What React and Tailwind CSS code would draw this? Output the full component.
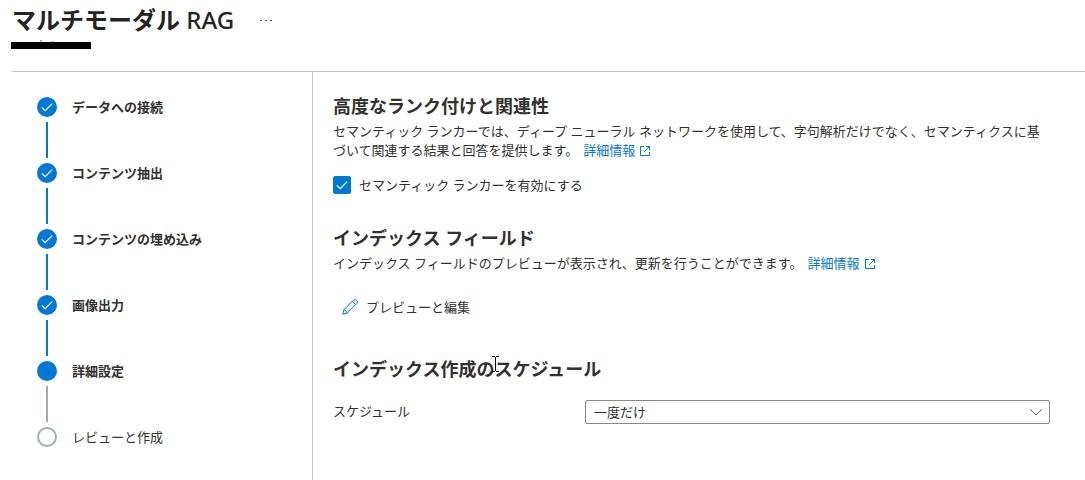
import React, { useState } from "react";

const steps = [
  { label: "データへの接続", status: "done" },
  { label: "コンテンツ抽出", status: "done" },
  { label: "コンテンツの埋め込み", status: "done" },
  { label: "画像出力", status: "done" },
  { label: "詳細設定", status: "current" },
  { label: "レビューと作成", status: "todo" },
];

const CheckMark = ({ className }) => (
  <svg viewBox="0 0 12 12" className={className} fill="none" stroke="currentColor" strokeWidth="1.2" aria-hidden="true">
    <path d="M0.8 6.3 4.2 9.7 11.2 2.7" />
  </svg>
);

const ExternalIcon = () => (
  <svg viewBox="0 0 10 10" className="ml-[5px] inline-block h-[10px] w-[10px] align-[-1px]" fill="none" stroke="currentColor" aria-hidden="true">
    <path d="M4 0.5H0.5V9.5H9.5V6M6 0.5H9.5V4M9.5 0.5 4 6" />
  </svg>
);

const PencilIcon = () => (
  <svg viewBox="0 0 16 16" className="h-4 w-4 text-[#0078d4]" fill="none" stroke="currentColor" aria-hidden="true">
    <path d="M0.7 15.3 1.9 10.8 11.6 1.1Q13.2 -0.1 14.7 1.3 16.1 2.8 14.9 4.4L5.2 14.1ZM1.9 10.8Q4.7 11.3 5.2 14.1M10.4 2.3 13.7 5.6" />
  </svg>
);

const Step = ({ step, isLast }) => {
  const done = step.status === "done";
  const todo = step.status === "todo";

  return (
    <li className="flex gap-[15px]">
      <div className="flex w-5 flex-col items-center">
        <span
          className={`flex h-5 w-5 items-center justify-center rounded-full text-white ${
            todo ? "border-2 border-[#a0aeb2] bg-white" : "bg-[#0078d4]"
          }`}
        >
          {done && <CheckMark className="h-3 w-3" />}
        </span>
        {!isLast && <span className={`my-[5px] h-9 w-0.5 ${done ? "bg-[#0078d4]" : "bg-[#a0aeb2]"}`} />}
      </div>
      <a href="#" className={`h-5 leading-5 ${todo ? "" : "font-semibold"}`}>
        {step.label}
      </a>
    </li>
  );
};

const InfoLink = () => (
  <a href="#" className="ml-[5px] whitespace-nowrap text-[#0078d4]">
    詳細情報
    <ExternalIcon />
  </a>
);

const App = () => {
  const [semantic, setSemantic] = useState(true);
  const [schedule, setSchedule] = useState("once");

  return (
    <div
      lang="ja"
      className="flex min-h-screen flex-col overflow-hidden bg-white pl-3 font-['Noto_Sans','Noto_Sans_CJK_JP',sans-serif] text-[13px] text-[#323130]"
    >
      <header className="h-[72px] border-b border-[#c4c4c4]">
        <div className="flex h-10 items-center">
          <h1 className="text-2xl leading-10 font-bold text-[#242424]">
            マルチモーダル <span className="font-medium">RAG</span>
          </h1>
          <button type="button" aria-label="その他" className="ml-[25px] flex gap-[3px] p-px">
            <span className="h-px w-0.5 bg-[#605e5c]" />
            <span className="h-px w-0.5 bg-[#605e5c]" />
            <span className="h-px w-0.5 bg-[#605e5c]" />
          </button>
        </div>
        {/* redacted subtitle, tips of its letters stay visible above the bar */}
        <div className="flex h-0.5 items-end gap-[10px] pl-7">
          <span className="h-0.5 w-0.5 bg-[#b5a9a3]" />
          <span className="h-px w-0.5 bg-[#a3a3b5]" />
        </div>
        <div className="-ml-px h-[7px] w-20 bg-black" />
      </header>

      <div className="flex flex-1">
        <nav className="w-[301px] shrink-0 border-r border-[#c4c4c4] pt-[25px] pl-[25px]">
          <ol>
            {steps.map((step, i) => (
              <Step key={step.label} step={step} isLast={i === steps.length - 1} />
            ))}
          </ol>
        </nav>

        <main className="min-w-0 flex-1 pt-[22px] pr-[35px] pl-5">
          <section>
            <h2 className="text-lg leading-6 font-semibold">高度なランク付けと関連性</h2>
            <p className="mt-1 leading-[19px]">
              セマンティック ランカーでは、ディープ ニューラル ネットワークを使用して、字句解析だけでなく、セマンティクスに基づいて関連する結果と回答を提供します。
              <InfoLink />
            </p>
            <div className="mt-4 flex items-center gap-2">
              <span className="relative flex h-[18px] w-[18px]">
                <input
                  id="semantic"
                  type="checkbox"
                  checked={semantic}
                  onChange={(e) => setSemantic(e.target.checked)}
                  className="h-[18px] w-[18px] appearance-none rounded-xs border border-[#323130] checked:border-[#0078d4] checked:bg-[#0078d4]"
                />
                {semantic && <CheckMark className="pointer-events-none absolute inset-[3px] h-3 w-3 text-white" />}
              </span>
              <label htmlFor="semantic" className="leading-[18px]">
                セマンティック ランカーを有効にする
              </label>
            </div>
          </section>

          <section className="mt-8">
            <h2 className="text-lg leading-6 font-semibold">インデックス フィールド</h2>
            <p className="mt-1 leading-[19px]">
              インデックス フィールドのプレビューが表示され、更新を行うことができます。
              <InfoLink />
            </p>
            <button type="button" className="mt-6 ml-[9px] flex items-center gap-2 leading-5">
              <PencilIcon />
              プレビューと編集
            </button>
          </section>

          <section className="mt-10">
            <h2 className="relative text-lg leading-6 font-semibold">
              インデックス作成のスケジュール
              {/* text cursor */}
              <svg viewBox="0 0 7 16" className="absolute top-[-1px] left-[159px] h-4 w-[7px]" fill="none" stroke="#000" aria-hidden="true">
                <path d="M0 0.5H3M4 0.5H7M3.5 1V15M0 15.5H3M4 15.5H7" />
              </svg>
            </h2>
            <div className="mt-[19px] flex items-center">
              <label htmlFor="schedule" className="w-[252px] shrink-0">
                スケジュール
              </label>
              <div className="relative flex-1">
                <select
                  id="schedule"
                  value={schedule}
                  onChange={(e) => setSchedule(e.target.value)}
                  className="block h-6 w-full appearance-none rounded-xs border border-[#8a8886] bg-white pr-8 pl-2 leading-[22px]"
                >
                  <option value="once">一度だけ</option>
                  <option value="hourly">1 時間ごと</option>
                  <option value="daily">毎日</option>
                </select>
                <svg viewBox="0 0 12 7" className="pointer-events-none absolute top-[9px] right-2 h-[7px] w-3" fill="none" stroke="#605e5c" aria-hidden="true">
                  <path d="M0.5 0.5 6 6 11.5 0.5" />
                </svg>
              </div>
            </div>
          </section>
        </main>
      </div>
    </div>
  );
};

export default App;
